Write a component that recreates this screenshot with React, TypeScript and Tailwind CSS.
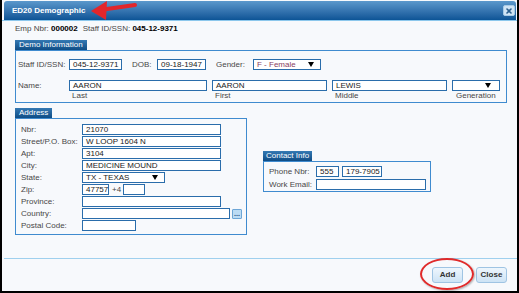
import React from 'react';

const fieldCls =
  'h-[11px] shrink-0 border border-[#2a6dab] bg-white px-[3px] text-[8px] leading-[9px] text-[#1a1a1a] whitespace-nowrap overflow-hidden';

const Field: React.FC<{ className?: string; value?: string }> = ({ className = '', value = '' }) => (
  <div className={`${fieldCls} ${className}`}>{value}</div>
);

const Select: React.FC<{ className?: string; value?: string; textClass?: string }> = ({
  className = '',
  value = '',
  textClass = 'text-[#1a1a1a]',
}) => (
  <div className={`${fieldCls} flex items-center justify-between pr-[6px] ${className}`}>
    <span className={textClass}>{value}</span>
    <span className="h-0 w-0 border-x-[3px] border-t-[5px] border-x-transparent border-t-black" />
  </div>
);

const Legend: React.FC<{ children: React.ReactNode; className?: string }> = ({ children, className = 'px-[4px]' }) => (
  <div
    className={`self-start h-[10px] bg-linear-to-b from-[#3479b3] to-[#0e4d86] text-[8px] leading-[10px] text-white ${className}`}
  >
    {children}
  </div>
);

const AddrRow: React.FC<{ label: string; children: React.ReactNode }> = ({ label, children }) => (
  <div className="flex h-[11px] items-center">
    <span className="w-[61px] shrink-0 leading-[11px]">{label}</span>
    {children}
  </div>
);

export default function App() {
  return (
    <div className="relative flex h-[293px] w-[519px] flex-col overflow-hidden border-x-2 border-b-2 border-black bg-[#f7f9fc] font-['Liberation_Sans',Arial,sans-serif] text-[8px] text-[#474747]">
      {/* title bar */}
      <div className="ml-[2px] mr-[1px] mt-[1px] flex h-[19px] shrink-0 items-center justify-between rounded-t-[3px] bg-linear-to-b from-[#5b98cc] to-[#0c5496] pl-[8px] pr-[1px]">
        <span className="text-[8px] font-bold text-white">ED20 Demographic</span>
        <button className="flex h-[11px] w-[12px] items-center justify-center rounded-[2px] border border-[#a7cae6] bg-[#d0e4f5]">
          <svg width="6" height="6" viewBox="0 0 6 6">
            <path d="M1 1L5 5M5 1L1 5" stroke="#2b5f8f" strokeWidth="1.6" strokeLinecap="round" />
          </svg>
        </button>
      </div>

      {/* body */}
      <div className="flex flex-1 flex-col border-t border-[#8cc7ec] pl-[13px] pr-[10px]">
        <div className="mt-[3px] leading-[10px]">
          Emp Nbr: <b className="text-black">000002</b>
          <span className="ml-[5px]">Staff ID/SSN:</span> <b className="text-black">045-12-9371</b>
        </div>

        {/* demo information */}
        <div className="mt-[6px] flex flex-col">
          <Legend>Demo Information</Legend>
          <div className="h-[53px] border border-[#3f8bcf] pl-[2px] pt-[8px]">
            <div className="flex h-[11px] items-center">
              <span className="w-[51px] shrink-0">Staff ID/SSN:</span>
              <Field className="w-[53px]" value="045-12-9371" />
              <span className="ml-[10px] w-[25px] shrink-0">DOB:</span>
              <Field className="w-[49px]" value="09-18-1947" />
              <span className="ml-[10px] w-[37px] shrink-0">Gender:</span>
              <Select className="w-[68px]" value="F - Female" textClass="text-[#8a3f62]" />
            </div>
            <div className="mt-[10px] flex">
              <span className="w-[51px] shrink-0 leading-[11px]">Name:</span>
              <div className="flex w-[138px] flex-col">
                <Field className="w-[138px]" value="AARON" />
                <span className="pl-[3px] leading-[9px]">Last</span>
              </div>
              <div className="ml-[5px] flex w-[115px] flex-col">
                <Field className="w-[115px]" value="AARON" />
                <span className="pl-[3px] leading-[9px]">First</span>
              </div>
              <div className="ml-[5px] flex w-[115px] flex-col">
                <Field className="w-[115px]" value="LEWIS" />
                <span className="pl-[3px] leading-[9px]">Middle</span>
              </div>
              <div className="ml-[5px] flex w-[48px] flex-col">
                <Select className="w-[48px] pr-[8px]" />
                <span className="pl-[4px] leading-[9px]">Generation</span>
              </div>
            </div>
          </div>
        </div>

        {/* address + contact */}
        <div className="mt-[5px] flex items-center">
          <div className="flex w-[232px] flex-col">
            <Legend>Address</Legend>
            <div className="flex h-[117px] flex-col gap-[1px] border border-[#3f8bcf] pl-[5px] pt-[5px]">
              <AddrRow label="Nbr:">
                <Field className="w-[139px]" value="21070" />
              </AddrRow>
              <AddrRow label="Street/P.O. Box:">
                <Field className="w-[139px]" value="W LOOP 1604 N" />
              </AddrRow>
              <AddrRow label="Apt:">
                <Field className="w-[139px]" value="3104" />
              </AddrRow>
              <AddrRow label="City:">
                <Field className="w-[139px]" value="MEDICINE MOUND" />
              </AddrRow>
              <AddrRow label="State:">
                <Select className="w-[83px] pr-[5px]" value="TX - TEXAS" />
              </AddrRow>
              <AddrRow label="Zip:">
                <Field className="w-[27px] px-[1px]" value="47757" />
                <span className="ml-[3px] w-[11px]">+4</span>
                <Field className="w-[22px]" />
              </AddrRow>
              <AddrRow label="Province:">
                <Field className="w-[139px]" />
              </AddrRow>
              <AddrRow label="Country:">
                <Field className="w-[148px]" />
                <button className="ml-[2px] flex h-[10px] w-[10px] items-center justify-center rounded-[1px] border border-[#6da6d6] bg-[#bcdcf4] text-[7px] leading-[4px] font-bold text-[#1c4f80]">
                  ...
                </button>
              </AddrRow>
              <AddrRow label="Postal Code:">
                <Field className="w-[54px]" />
              </AddrRow>
            </div>
          </div>

          <div className="ml-[16px] flex w-[168px] flex-col">
            <Legend className="px-[3px]">Contact Info</Legend>
            <div className="flex flex-col gap-[2px] border border-[#3f8bcf] pb-[1px] pl-[5px] pt-[4px]">
              <div className="flex h-[11px] items-center">
                <span className="w-[47px] shrink-0">Phone Nbr:</span>
                <Field className="w-[23px]" value="555" />
                <Field className="ml-[3px] w-[40px]" value="179-7905" />
              </div>
              <div className="flex h-[11px] items-center">
                <span className="w-[47px] shrink-0">Work Email:</span>
                <Field className="w-[110px]" />
              </div>
            </div>
          </div>
        </div>
      </div>

      {/* footer */}
      <div className="ml-[2px] flex h-[33px] shrink-0 justify-end gap-[13px] border-t border-[#9fd0ee] pr-[10px] pt-[8px]">
        <button className="h-[16px] w-[31px] rounded-[3px] border border-[#9fc4e3] bg-linear-to-b from-[#eef6fd] to-[#cde3f5] text-[8px] font-bold text-[#333]">
          Add
        </button>
        <button className="h-[16px] w-[31px] rounded-[3px] border border-[#9fc4e3] bg-linear-to-b from-[#eef6fd] to-[#cde3f5] text-[8px] font-bold text-[#333]">
          Close
        </button>
      </div>

      {/* annotations */}
      <div className="absolute left-[418px] top-[258px] h-[32px] w-[54px] rounded-[50%] border-2 border-[#e02a2a] shadow-[1px_1px_2px_rgba(0,0,0,0.3)]" />
      <svg className="absolute left-[86px] top-0" width="52" height="22" viewBox="0 0 52 22">
        <path d="M12 10 L47 5" stroke="#e3262b" strokeWidth="4" strokeLinecap="round" />
        <polygon points="3,11 19,1 18,20" fill="#e3262b" />
      </svg>
    </div>
  );
}
